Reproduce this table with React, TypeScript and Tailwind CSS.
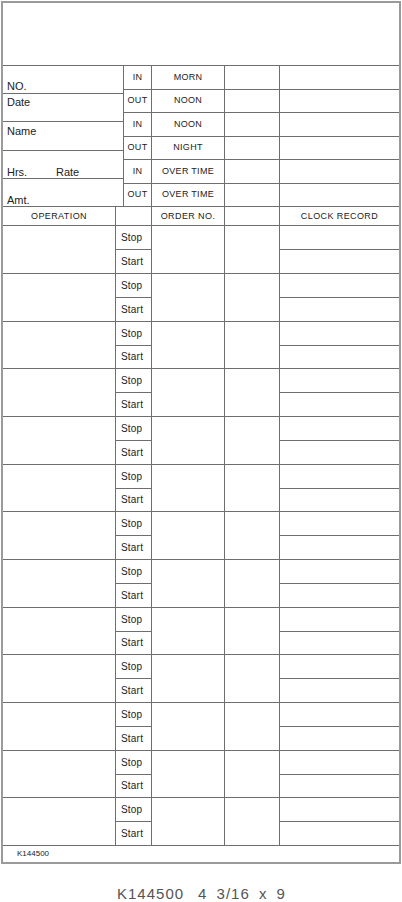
import React from 'react';

const ln = 'border-[#6e6e6e]';

const topRows = [
  ['IN', 'MORN'],
  ['OUT', 'NOON'],
  ['IN', 'NOON'],
  ['OUT', 'NIGHT'],
  ['IN', 'OVER TIME'],
  ['OUT', 'OVER TIME'],
];

const groups = Array.from({ length: 13 }, (_, i) => i);

const TimeCard: React.FC = () => {
  return (
    <div
      className="bg-white min-h-screen pl-[1px] pt-[1px] text-[#222]"
      style={{ fontFamily: '"Liberation Sans", Arial, sans-serif' }}
    >
      <div className="w-[400px] border-2 border-[#9a9a9a]">
        {/* blank top box */}
        <div className={`h-[63px] border-b ${ln}`} />

        {/* employee info + in/out rows */}
        <div className="flex">
          <div className={`w-[121px] border-r ${ln} flex flex-col text-[11px] leading-none`}>
            <div className={`h-[28px] border-b ${ln} flex items-end pl-[4px] pb-[1px]`}>NO.</div>
            <div className={`h-[28px] border-b ${ln} flex items-start pl-[4px] pt-[3px]`}>Date</div>
            <div className={`h-[29px] border-b ${ln} flex items-start pl-[4px] pt-[4px]`}>Name</div>
            <div className={`h-[28px] border-b ${ln} flex items-end pl-[4px] pb-[0px]`}>
              <span className="w-[49px]">Hrs.</span>
              <span>Rate</span>
            </div>
            <div className={`h-[28px] border-b ${ln} flex items-end pl-[4px] pb-[0px]`}>Amt.</div>
          </div>
          <div className="flex-1 flex flex-col text-[9px] tracking-[0.3px] leading-none">
            {topRows.map(([io, label], i) => (
              <div key={i} className={`${i % 2 === 0 ? 'h-[24px]' : 'h-[23px]'} border-b ${ln} flex`}>
                <div className={`w-[28px] border-r ${ln} flex items-center justify-center pb-[1px]`}>{io}</div>
                <div className={`w-[73px] border-r ${ln} flex items-center justify-center pb-[1px]`}>{label}</div>
                <div className={`w-[55px] border-r ${ln}`} />
                <div className="flex-1" />
              </div>
            ))}
          </div>
        </div>

        {/* column header */}
        <div className={`h-[19px] border-b ${ln} flex text-[9px] tracking-[0.4px] leading-none`}>
          <div className={`w-[113px] border-r ${ln} flex items-center justify-center`}>OPERATION</div>
          <div className={`w-[36px] border-r ${ln}`} />
          <div className={`w-[73px] border-r ${ln} flex items-center justify-center`}>ORDER NO.</div>
          <div className={`w-[55px] border-r ${ln}`} />
          <div className="flex-1 flex items-center justify-center">CLOCK RECORD</div>
        </div>

        {/* operation groups */}
        {groups.map((i) => (
          <div key={i} className={`${i % 3 === 2 ? 'h-[47px]' : 'h-[48px]'} border-b ${ln} flex`}>
            <div className={`w-[113px] border-r ${ln}`} />
            <div className={`w-[36px] border-r ${ln} flex flex-col text-[10px] tracking-[0.2px] leading-none`}>
              <div className={`h-[24px] border-b ${ln} flex items-center pl-[5px] pt-[1px]`}>Stop</div>
              <div className="flex-1 flex items-center pl-[5px]">Start</div>
            </div>
            <div className={`w-[73px] border-r ${ln}`} />
            <div className={`w-[55px] border-r ${ln}`} />
            <div className="flex-1 flex flex-col">
              <div className={`h-[24px] border-b ${ln}`} />
              <div className="flex-1" />
            </div>
          </div>
        ))}

        {/* footer */}
        <div className="h-[16px] flex items-center pl-[14px] text-[8px] leading-none">K144500</div>
      </div>

      <div className="mt-[22px] flex justify-center text-[15px] tracking-[1px] [word-spacing:4px] text-[#555] leading-none">
        <span>K144500</span>
        <span className="ml-[14px]">4 3/16 x 9</span>
      </div>
    </div>
  );
};

export default function App() {
  return <TimeCard />;
}
